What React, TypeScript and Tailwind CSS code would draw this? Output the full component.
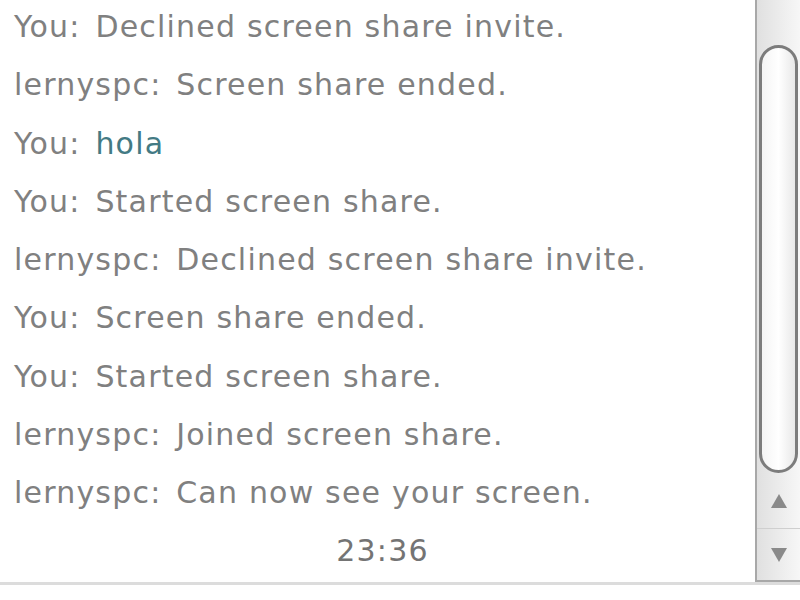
import React from "react";

const lines: { who: string; msg: string; hl?: boolean }[] = [
  { who: "You:", msg: "Declined screen share invite." },
  { who: "lernyspc:", msg: "Screen share ended." },
  { who: "You:", msg: "hola", hl: true },
  { who: "You:", msg: "Started screen share." },
  { who: "lernyspc:", msg: "Declined screen share invite." },
  { who: "You:", msg: "Screen share ended." },
  { who: "You:", msg: "Started screen share." },
  { who: "lernyspc:", msg: "Joined screen share." },
  { who: "lernyspc:", msg: "Can now see your screen." },
];

export default function App() {
  return (
    <div className="w-[800px] h-[600px] bg-white overflow-hidden flex flex-col" style={{ fontFamily: '"DejaVu Sans", Verdana, sans-serif' }}>
      <div className="flex h-[582px]">
        <div className="flex-1 flex flex-col pl-[14px] -mt-[2px] text-[30px] leading-[58.25px] tracking-[1.2px] text-[#808080]">
          {lines.map((l, i) => (
            <div key={i} className="whitespace-nowrap">
              <span>{l.who}</span>{" "}
              {l.hl ? (
                <span className="ml-[4px] text-[#437a84]">{l.msg}</span>
              ) : (
                <span className="ml-[4px]">{l.msg}</span>
              )}
            </div>
          ))}
          <div className="text-center pr-[4px] text-[#747474]">23:36</div>
        </div>
        <div className="w-[45px] relative border-l-[2px] border-[#a8a8a8] bg-gradient-to-r from-[#e0e0e0] to-[#f7f7f7] flex flex-col border-b-[2px]">
          <div className="h-[45px]" />
          <div className="mx-[2px] h-[428px] rounded-[20px] border-[3px] border-[#7c7c7c] bg-gradient-to-r from-[#f4f4f4] via-white to-[#e8e8e8]" />
          <div className="flex-1 flex flex-col items-center">
            <div className="h-[56px] w-full flex items-center justify-center border-b border-[#cfcfcf]">
              <svg width="18" height="16" viewBox="0 0 18 16"><polygon points="9,1 17,15 1,15" fill="#8a8a8a" /></svg>
            </div>
            <div className="flex-1 w-full flex items-center justify-center">
              <svg width="18" height="16" viewBox="0 0 18 16"><polygon points="1,1 17,1 9,15" fill="#8a8a8a" /></svg>
            </div>
          </div>
        </div>
      </div>
      <div className="h-[3px] bg-[#dcdcdc]" />
      <div className="flex-1 bg-white" />
    </div>
  );
}
